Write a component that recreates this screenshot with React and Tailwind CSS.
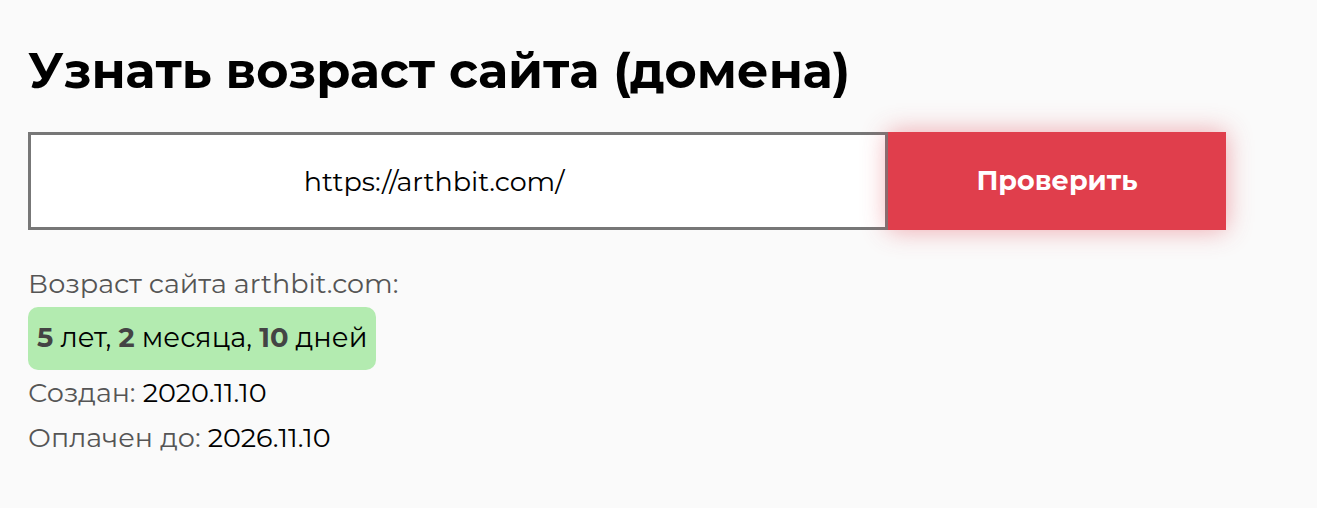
import React, { useState } from 'react';

const App = () => {
  const [url, setUrl] = useState('https://arthbit.com/');

  return (
    <div className="min-h-screen bg-[#fafafa] font-['Montserrat','Open_Sans',sans-serif] text-black">
      <div className="px-[28px] pt-[40px]">
        <h1 className="text-[49.3px] font-bold leading-[60px]">Узнать возраст сайта (домена)</h1>

        <div className="mt-[32px] flex w-[1198px]">
          <input
            value={url}
            onChange={(e) => setUrl(e.target.value)}
            className="h-[98px] w-[860px] border-[3px] border-[#777] bg-white pr-[48px] text-center text-[27px] text-black outline-none"
          />
          <button className="h-[98px] w-[338px] bg-[#e03e4c] text-[27px] font-bold text-white shadow-[0_0_24px_rgba(224,62,76,0.45)]">
            Проверить
          </button>
        </div>

        <div className="mt-[37px] text-[27px] leading-[33px] text-[#555]">Возраст сайта arthbit.com:</div>
        <div className="mt-[7px] inline-flex h-[63px] items-center rounded-[10px] bg-[#b3ebb0] px-[9px] text-[27.3px] text-black">
          <b className="text-[#444]">5</b>&nbsp;лет,&nbsp;<b className="text-[#444]">2</b>&nbsp;месяца,&nbsp;<b className="text-[#444]">10</b>&nbsp;дней
        </div>
        <div className="mt-[6px] text-[27px] leading-[33px] text-[#555]">
          Создан: <span className="text-black">2020.11.10</span>
        </div>
        <div className="mt-[12px] text-[27px] leading-[33px] text-[#555]">
          Оплачен до: <span className="text-black">2026.11.10</span>
        </div>
      </div>
    </div>
  );
};

export default App;
